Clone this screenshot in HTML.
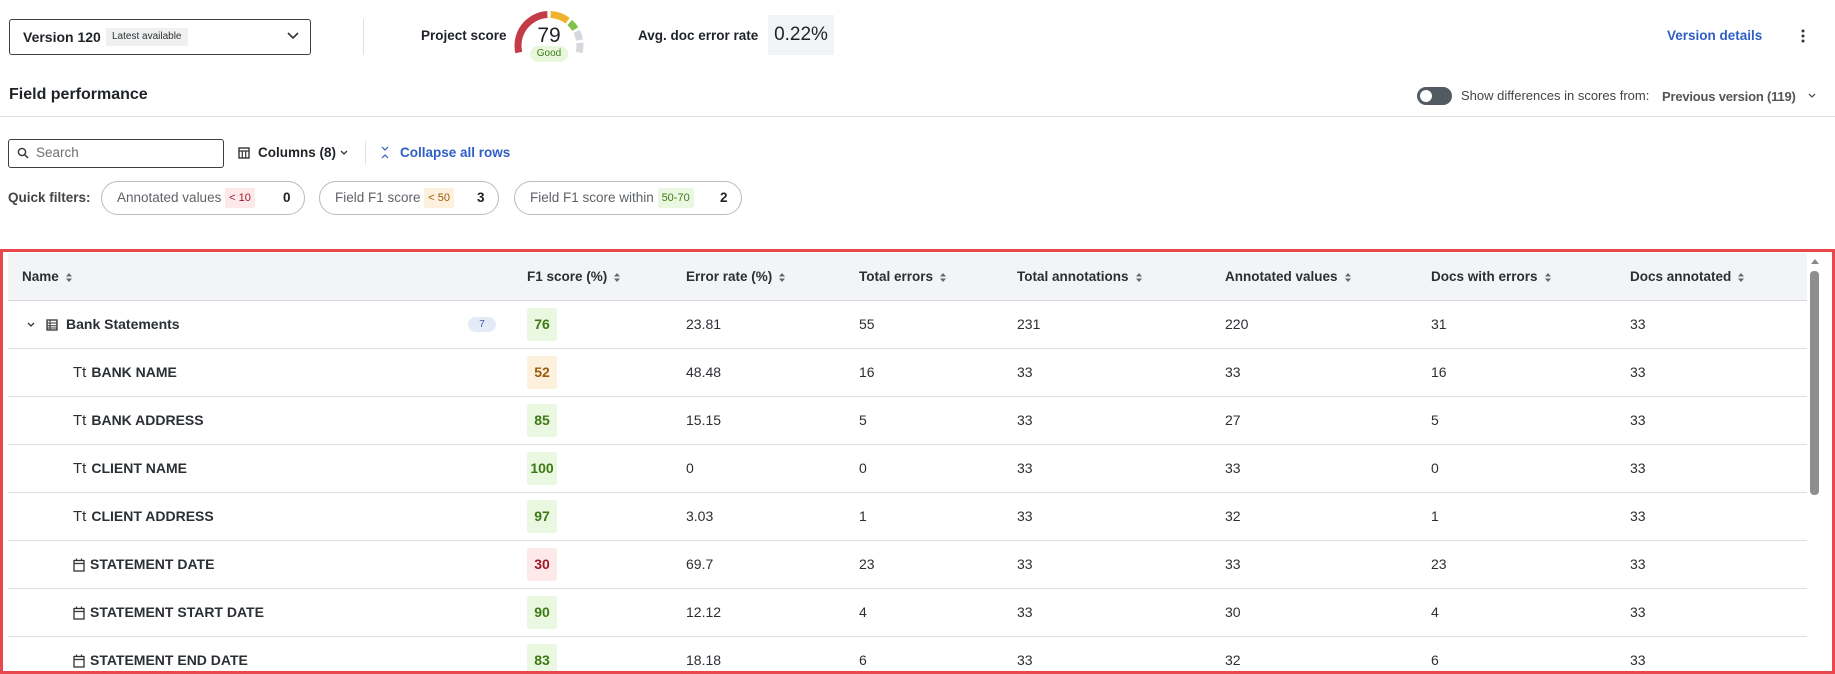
<!DOCTYPE html>
<html style="width:1835px;height:674px;overflow:hidden"><head><meta charset="utf-8"><style>
*{box-sizing:border-box;margin:0;padding:0}
body{width:1835px;height:674px;overflow:hidden;background:#fff;font-family:"Liberation Sans",sans-serif;color:#1f2328;position:relative}
.a{position:absolute;white-space:nowrap}
.b{font-weight:bold}
.row{position:absolute;left:8px;width:1799px;height:48px;border-bottom:1px solid #dcdfe3}
.c{position:absolute;top:0;line-height:47px;font-size:14px;color:#2b2f33}
.p{position:absolute;left:519px;top:7px;width:30px;height:33px;border-radius:3px;font-size:14px;font-weight:bold;text-align:center;line-height:33px}
.g{background:#ebf8e1;color:#3d7a14}.o{background:#fdf0dc;color:#9a5b0a}.r{background:#fde9ea;color:#a0182a}
.hd{position:absolute;top:0;line-height:47px;font-size:13.5px;font-weight:bold;color:#2b2f33}
.s{display:inline-block;vertical-align:middle;margin-left:6px}
.pill{position:absolute;top:181px;height:34px;border:1px solid #b8bcc2;border-radius:17px;font-size:13.5px;color:#5f6368;line-height:32px}
.tag{display:inline-block;font-size:11px;padding:0 4px;line-height:20px;border-radius:2px;vertical-align:middle}
#clip{position:absolute;left:0;top:0;width:1835px;height:671px;overflow:hidden}
</style></head><body>

<!-- top bar -->
<div class="a" style="left:9px;top:19px;width:302px;height:36px;border:1px solid #3c4043;border-radius:3px"></div>
<div class="a b" style="left:23px;top:29px;font-size:14px">Version 120</div>
<div class="a" style="left:106px;top:28px;background:#eef0f2;font-size:10px;padding:0 6px;height:18px;line-height:18px;color:#333">Latest available</div>
<svg class="a" style="left:286px;top:31px" width="14" height="10"><path d="M2 2 L7 7 L12 2" fill="none" stroke="#333" stroke-width="1.6"/></svg>
<div class="a" style="left:363px;top:19px;width:1px;height:36px;background:#dfe1e4"></div>
<div class="a b" style="left:421px;top:28px;font-size:13.5px">Project score</div>
<svg class="a" style="left:509px;top:5px" width="80" height="60">
<g fill="none" stroke-width="7">
<path d="M9.8 47.5 A31 31 0 0 1 38.38 9.54" stroke="#c23b46"/>
<path d="M41.62 9.54 A31 31 0 0 1 58.66 15.73" stroke="#efb22a"/>
<path d="M60.74 17.47 A31 31 0 0 1 66.29 24.07" stroke="#7fc14c"/>
<path d="M67.62 26.43 A31 31 0 0 1 70.53 35.11" stroke="#d5d8dc"/>
<path d="M70.88 37.8 A31 31 0 0 1 70.2 47.47" stroke="#d5d8dc"/>
</g></svg>
<div class="a" style="left:529px;top:24px;width:40px;text-align:center;font-size:21px">79</div>
<div class="a" style="left:530px;top:46px;width:38px;height:16px;border-radius:8px;background:#e8f7dc;color:#3a7d1c;font-size:10px;text-align:center;line-height:16px">Good</div>
<div class="a b" style="left:638px;top:28px;font-size:13.5px">Avg. doc error rate</div>
<div class="a" style="left:768px;top:15px;width:66px;height:40px;background:#f1f3f5;font-size:19px;line-height:40px;text-align:center">0.22%</div>
<div class="a b" style="left:1667px;top:28px;font-size:13.5px;color:#2f5fc4">Version details</div>
<svg class="a" style="left:1800px;top:28px" width="6" height="16"><circle cx="3" cy="3" r="1.5" fill="#333"/><circle cx="3" cy="8" r="1.5" fill="#333"/><circle cx="3" cy="13" r="1.5" fill="#333"/></svg>

<div class="a b" style="left:9px;top:86px;font-size:16px">Field performance</div>
<div class="a" style="left:1417px;top:87px;width:35px;height:18px;border-radius:9px;background:#535a61"></div>
<div class="a" style="left:1420px;top:90px;width:12px;height:12px;border-radius:6px;background:#fff"></div>
<div class="a" style="left:1461px;top:88px;font-size:13px;color:#444">Show differences in scores from:</div>
<div class="a" style="left:1662px;top:89px;font-size:13px;color:#555;font-weight:bold;letter-spacing:-0.2px">Previous version (119)</div>
<svg class="a" style="left:1808px;top:93px" width="8" height="6"><path d="M1 1 L4 4 L7 1" fill="none" stroke="#555" stroke-width="1.3"/></svg>
<div class="a" style="left:0;top:116px;width:1835px;height:1px;background:#dcdfe2"></div>

<!-- toolbar -->
<div class="a" style="left:8px;top:139px;width:216px;height:29px;border:1px solid #3c4043;border-radius:3px"></div>
<svg class="a" style="left:17px;top:147px" width="12" height="12"><circle cx="5" cy="5" r="3.6" fill="none" stroke="#333" stroke-width="1.4"/><path d="M7.6 7.6 L11 11" stroke="#333" stroke-width="1.5"/></svg>
<div class="a" style="left:36px;top:145px;font-size:13.5px;color:#6b6f74">Search</div>
<svg class="a" style="left:238px;top:147px" width="12" height="12"><rect x="1" y="1" width="10" height="10" fill="none" stroke="#333" stroke-width="1.4"/><path d="M1 4 H11 M4.3 4 V11 M7.7 4 V11" stroke="#333" stroke-width="1.2"/></svg>
<div class="a b" style="left:258px;top:145px;font-size:13.5px">Columns (8)</div>
<svg class="a" style="left:340px;top:150px" width="8" height="6"><path d="M1 1 L4 4 L7 1" fill="none" stroke="#333" stroke-width="1.3"/></svg>
<div class="a" style="left:365px;top:141px;width:1px;height:24px;background:#dfe1e4"></div>
<svg class="a" style="left:381px;top:146px" width="8" height="13"><path d="M1 1 L4 4 L7 1 M1 12 L4 9 L7 12" fill="none" stroke="#2f5fc4" stroke-width="1.2"/></svg>
<div class="a b" style="left:400px;top:145px;font-size:13.5px;color:#2f5fc4">Collapse all rows</div>

<div class="a b" style="left:8px;top:190px;font-size:13.5px;color:#444">Quick filters:</div>
<div class="pill" style="left:101px;width:204px"><span style="margin-left:15px">Annotated values</span> <span class="tag r">&lt; 10</span><span class="a b" style="left:181px;color:#222">0</span></div>
<div class="pill" style="left:319px;width:180px"><span style="margin-left:15px">Field F1 score</span> <span class="tag o">&lt; 50</span><span class="a b" style="left:157px;color:#222">3</span></div>
<div class="pill" style="left:514px;width:228px"><span style="margin-left:15px">Field F1 score within</span> <span class="tag g">50-70</span><span class="a b" style="left:205px;color:#222">2</span></div>

<div id="clip">
<!-- table -->
<div class="a" style="left:8px;top:253px;width:1799px;height:48px;background:#f3f4f6;border-bottom:1px solid #d5d8dc">
<div class="hd" style="left:14px">Name<svg class="s" width="8" height="11"><path d="M1 4.5 L4 1 L7 4.5Z M1 6.5 L4 10 L7 6.5Z" fill="#666"/></svg></div>
<div class="hd" style="left:519px">F1 score (%)<svg class="s" width="8" height="11"><path d="M1 4.5 L4 1 L7 4.5Z M1 6.5 L4 10 L7 6.5Z" fill="#666"/></svg></div>
<div class="hd" style="left:678px">Error rate (%)<svg class="s" width="8" height="11"><path d="M1 4.5 L4 1 L7 4.5Z M1 6.5 L4 10 L7 6.5Z" fill="#666"/></svg></div>
<div class="hd" style="left:851px">Total errors<svg class="s" width="8" height="11"><path d="M1 4.5 L4 1 L7 4.5Z M1 6.5 L4 10 L7 6.5Z" fill="#666"/></svg></div>
<div class="hd" style="left:1009px">Total annotations<svg class="s" width="8" height="11"><path d="M1 4.5 L4 1 L7 4.5Z M1 6.5 L4 10 L7 6.5Z" fill="#666"/></svg></div>
<div class="hd" style="left:1217px">Annotated values<svg class="s" width="8" height="11"><path d="M1 4.5 L4 1 L7 4.5Z M1 6.5 L4 10 L7 6.5Z" fill="#666"/></svg></div>
<div class="hd" style="left:1423px">Docs with errors<svg class="s" width="8" height="11"><path d="M1 4.5 L4 1 L7 4.5Z M1 6.5 L4 10 L7 6.5Z" fill="#666"/></svg></div>
<div class="hd" style="left:1622px">Docs annotated<svg class="s" width="8" height="11"><path d="M1 4.5 L4 1 L7 4.5Z M1 6.5 L4 10 L7 6.5Z" fill="#666"/></svg></div>
</div>

<div class="row" style="top:301px">
<svg class="a" style="left:19px;top:21px" width="8" height="6"><path d="M1 1 L4 4 L7 1" fill="none" stroke="#333" stroke-width="1.3"/></svg>
<svg class="a" style="left:38px;top:18px" width="12" height="12"><rect x="1" y="1" width="10" height="10" fill="none" stroke="#333" stroke-width="1.3"/><path d="M1 4 H11 M1 6.7 H11 M1 9 H11 M4 1 V11" stroke="#333" stroke-width="1"/></svg>
<div class="c b" style="left:58px">Bank Statements</div>
<div class="a" style="left:460px;top:16px;width:28px;height:15px;border-radius:8px;background:#e4ebf7;color:#3b5aa8;font-size:10px;text-align:center;line-height:15px">7</div>
<div class="p g">76</div><div class="c" style="left:678px">23.81</div><div class="c" style="left:851px">55</div><div class="c" style="left:1009px">231</div><div class="c" style="left:1217px">220</div><div class="c" style="left:1423px">31</div><div class="c" style="left:1622px">33</div>
</div>

<div class="row" style="top:349px"><div class="c b" style="left:65px"><span style="font-weight:normal;font-size:15px;margin-right:5px">Tt</span>BANK NAME</div>
<div class="p o">52</div><div class="c" style="left:678px">48.48</div><div class="c" style="left:851px">16</div><div class="c" style="left:1009px">33</div><div class="c" style="left:1217px">33</div><div class="c" style="left:1423px">16</div><div class="c" style="left:1622px">33</div></div>

<div class="row" style="top:397px"><div class="c b" style="left:65px"><span style="font-weight:normal;font-size:15px;margin-right:5px">Tt</span>BANK ADDRESS</div>
<div class="p g">85</div><div class="c" style="left:678px">15.15</div><div class="c" style="left:851px">5</div><div class="c" style="left:1009px">33</div><div class="c" style="left:1217px">27</div><div class="c" style="left:1423px">5</div><div class="c" style="left:1622px">33</div></div>

<div class="row" style="top:445px"><div class="c b" style="left:65px"><span style="font-weight:normal;font-size:15px;margin-right:5px">Tt</span>CLIENT NAME</div>
<div class="p g">100</div><div class="c" style="left:678px">0</div><div class="c" style="left:851px">0</div><div class="c" style="left:1009px">33</div><div class="c" style="left:1217px">33</div><div class="c" style="left:1423px">0</div><div class="c" style="left:1622px">33</div></div>

<div class="row" style="top:493px"><div class="c b" style="left:65px"><span style="font-weight:normal;font-size:15px;margin-right:5px">Tt</span>CLIENT ADDRESS</div>
<div class="p g">97</div><div class="c" style="left:678px">3.03</div><div class="c" style="left:851px">1</div><div class="c" style="left:1009px">33</div><div class="c" style="left:1217px">32</div><div class="c" style="left:1423px">1</div><div class="c" style="left:1622px">33</div></div>

<div class="row" style="top:541px"><svg class="a" style="left:65px;top:17px" width="12" height="14"><rect x="1" y="2.5" width="10" height="10.5" fill="none" stroke="#333" stroke-width="1.3"/><path d="M1 5.5 H11 M3.5 0.5 V3 M8.5 0.5 V3" stroke="#333" stroke-width="1.2"/></svg><div class="c b" style="left:82px">STATEMENT DATE</div>
<div class="p r">30</div><div class="c" style="left:678px">69.7</div><div class="c" style="left:851px">23</div><div class="c" style="left:1009px">33</div><div class="c" style="left:1217px">33</div><div class="c" style="left:1423px">23</div><div class="c" style="left:1622px">33</div></div>

<div class="row" style="top:589px"><svg class="a" style="left:65px;top:17px" width="12" height="14"><rect x="1" y="2.5" width="10" height="10.5" fill="none" stroke="#333" stroke-width="1.3"/><path d="M1 5.5 H11 M3.5 0.5 V3 M8.5 0.5 V3" stroke="#333" stroke-width="1.2"/></svg><div class="c b" style="left:82px">STATEMENT START DATE</div>
<div class="p g">90</div><div class="c" style="left:678px">12.12</div><div class="c" style="left:851px">4</div><div class="c" style="left:1009px">33</div><div class="c" style="left:1217px">30</div><div class="c" style="left:1423px">4</div><div class="c" style="left:1622px">33</div></div>

<div class="row" style="top:637px"><svg class="a" style="left:65px;top:17px" width="12" height="14"><rect x="1" y="2.5" width="10" height="10.5" fill="none" stroke="#333" stroke-width="1.3"/><path d="M1 5.5 H11 M3.5 0.5 V3 M8.5 0.5 V3" stroke="#333" stroke-width="1.2"/></svg><div class="c b" style="left:82px">STATEMENT END DATE</div>
<div class="p g">83</div><div class="c" style="left:678px">18.18</div><div class="c" style="left:851px">6</div><div class="c" style="left:1009px">33</div><div class="c" style="left:1217px">32</div><div class="c" style="left:1423px">6</div><div class="c" style="left:1622px">33</div></div>
</div>

<!-- scrollbar -->
<svg class="a" style="left:1810px;top:257px" width="10" height="8"><path d="M1 7 L5 2 L9 7Z" fill="#888"/></svg>
<div class="a" style="left:1810px;top:271px;width:9px;height:224px;border-radius:4px;background:#8e8e8e"></div>

<!-- red frame -->
<div class="a" style="left:0;top:249px;width:1835px;height:425px;border:3px solid #e8474c"></div>
</body></html>
